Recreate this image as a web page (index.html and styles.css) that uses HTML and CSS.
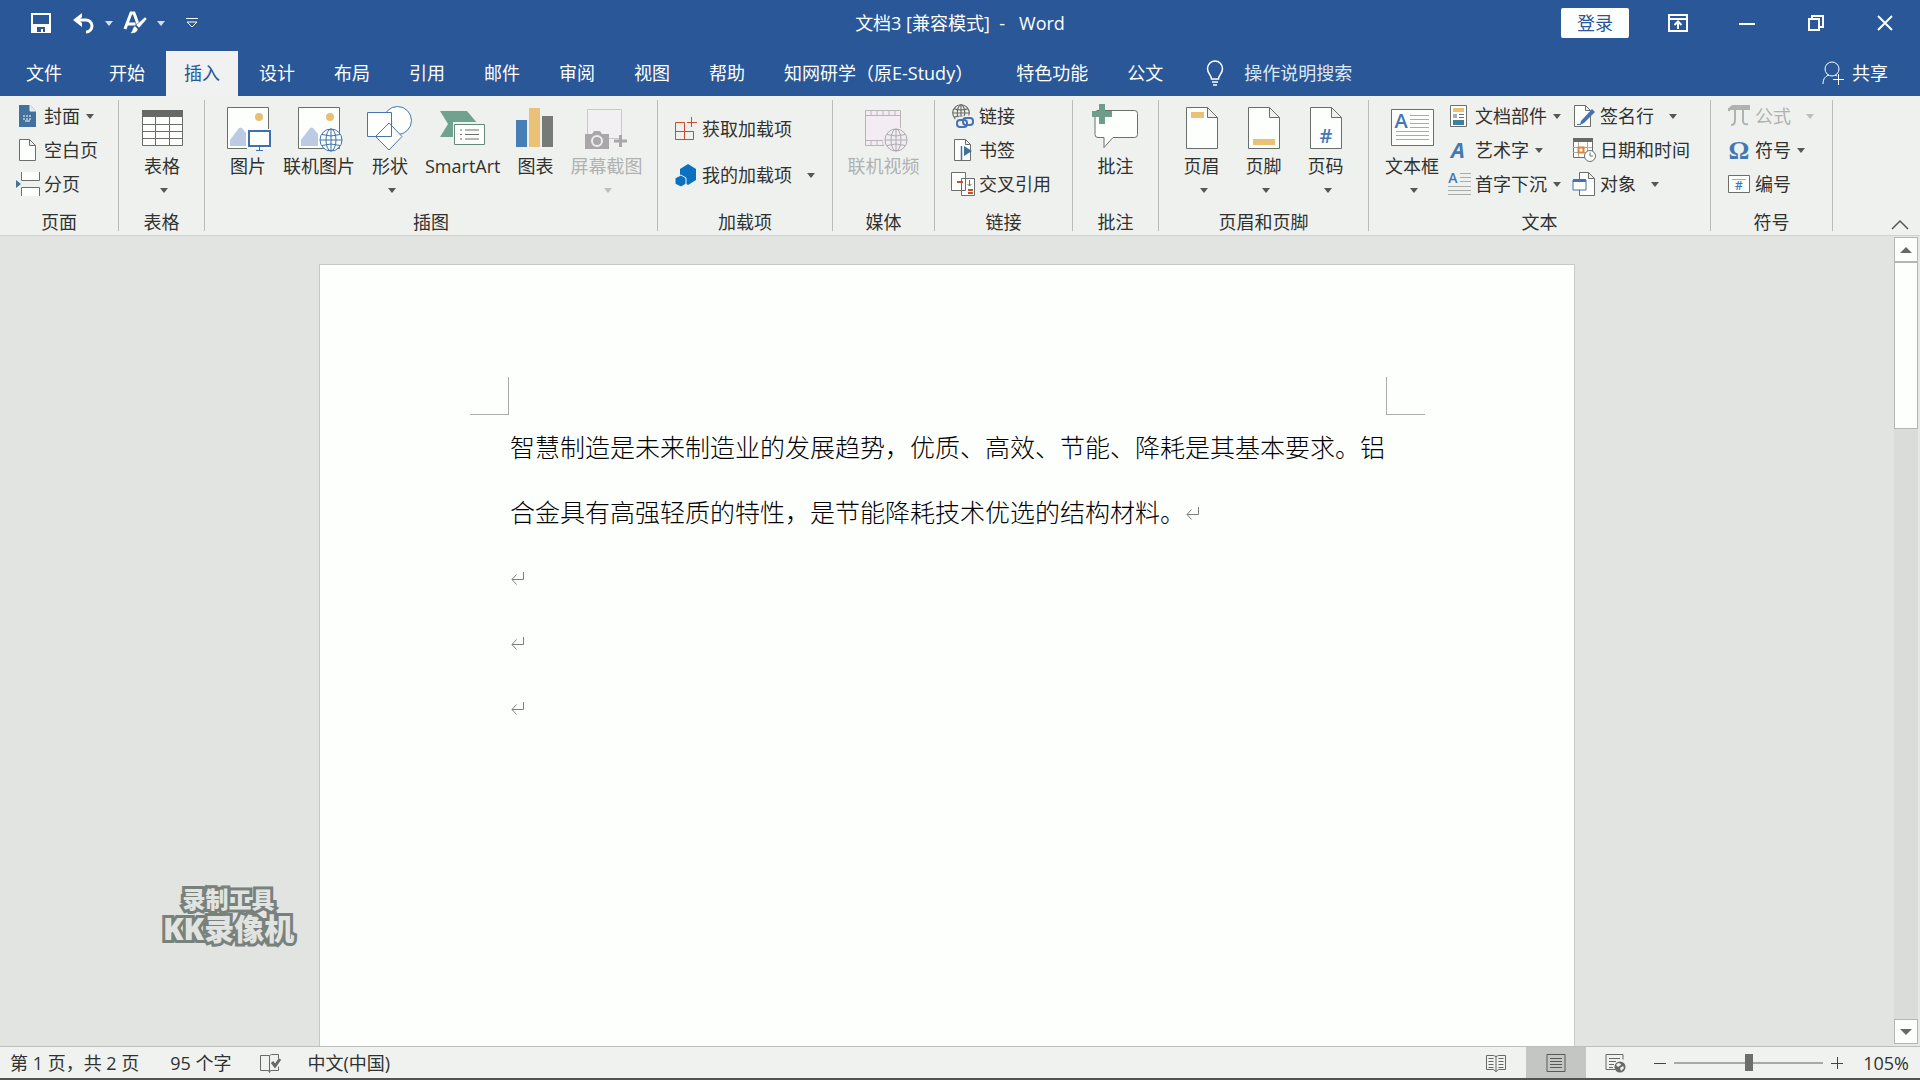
FILE: index.html
```html
<!DOCTYPE html>
<html lang="zh-CN">
<head>
<meta charset="utf-8">
<meta name="viewport" content="width=device-width, initial-scale=1">
<title>文档3 [兼容模式] - Word</title>
<link rel="stylesheet" href="styles.css">
</head>
<body>
<svg class="defs" aria-hidden="true">
  <symbol id="globe" viewBox="0 0 24 24">
    <circle cx="12" cy="12" r="11"/><ellipse cx="12" cy="12" rx="5" ry="11"/><path d="M12 1v22M1 12h22M3 6.500q9 3 18 0M3 17.500q9-3 18 0"/>
  </symbol>
  <symbol id="enter" viewBox="0 0 15 16">
    <path d="M13.500 2v7.500H2M6.500 4.500 2 9.500l4.500 5"/>
  </symbol>
</svg>
<div class="app">
<header class="top">
  <div class="titlebar">
    <div class="quick">
      <button class="qbtn" aria-label="保存"><svg width="20" height="20"><path d="M1 1h18v18H1zM1 12h18" fill="none" stroke="#fff" stroke-width="2"/><path d="M1 12h18v7H1z" fill="#fff"/><path d="M6 14h8v5h-2v-3h-2v3H6z" fill="#295797"/></svg></button>
      <button class="qbtn" aria-label="撤消"><svg width="22" height="20"><path d="M3 7h10a6 6 0 0 1 0 12" fill="none" stroke="#fff" stroke-width="3"/><path d="M0 7 9 0v4L6 7l3 3v4z" fill="#fff"/></svg></button>
      <button class="qbtn" aria-label="撤消选项"><span class="caret"></span></button>
      <button class="qbtn" aria-label="文本格式"><svg width="24" height="24"><path d="M2 18 8 2h3l4 11M4.500 13h8" fill="none" stroke="#fff" stroke-width="3"/><path d="m22 6 2 2-8 9-3-3zM12 15l3 3c-1 4-4 5-8 4 3-1 2-6 5-7z" fill="#fff" stroke="#295797" stroke-width=".500"/></svg></button>
      <button class="qbtn" aria-label="格式选项"><span class="caret"></span></button>
      <button class="qbtn custom" aria-label="自定义快速访问工具栏"><svg width="14" height="12"><path d="M1 1.500h12M2 5h10l-5 5z" fill="none" stroke="#fff"/></svg></button>
    </div>
    <h1 class="title">文档3 [兼容模式]&nbsp; -&nbsp;&nbsp; Word</h1>
    <div class="window">
      <button class="login">登录</button>
      <button class="wbtn" aria-label="功能区显示选项"><svg width="20" height="18"><path d="M1 1h18v16H1zM1 5h18M10 15V8M6.500 11 10 7.500l3.500 3.500" fill="none" stroke="#fff" stroke-width="2"/></svg></button>
      <button class="wbtn" aria-label="最小化"><svg width="16" height="16"><path d="M0 9h16" stroke="#fff" stroke-width="2"/></svg></button>
      <button class="wbtn" aria-label="还原"><svg width="16" height="16"><path d="M1 4h10v11H1zM4 4V1h11v11h-4" fill="none" stroke="#fff" stroke-width="2"/></svg></button>
      <button class="wbtn" aria-label="关闭"><svg width="16" height="16"><path d="m1 1 14 14M15 1 1 15" stroke="#fff" stroke-width="2"/></svg></button>
    </div>
  </div>
  <nav class="tabs">
    <button class="tab file">文件</button>
    <button class="tab">开始</button>
    <button class="tab active">插入</button>
    <button class="tab">设计</button>
    <button class="tab">布局</button>
    <button class="tab">引用</button>
    <button class="tab">邮件</button>
    <button class="tab">审阅</button>
    <button class="tab">视图</button>
    <button class="tab">帮助</button>
    <button class="tab plugin">知网研学（原E-Study）</button>
    <button class="tab">特色功能</button>
    <button class="tab">公文</button>
    <label class="search"><svg width="18" height="26" aria-hidden="true"><path d="M5.500 19c0-4-4-5-4-10.500a7.500 7.500 0 0 1 15 0c0 5.500-4 6.500-4 10.500zM6 22h6M7 25h4" fill="none" stroke="#fff" stroke-width="1.500"/></svg><input type="text" placeholder="操作说明搜索" aria-label="操作说明搜索"></label>
    <button class="share"><svg width="22" height="24" aria-hidden="true"><circle cx="10" cy="8" r="7" fill="none" stroke="#fff"/><path d="M1 23c0-6 3-8 6-9m6 0 2 1M16.500 13v11M11 18.500h11" fill="none" stroke="#fff"/></svg>共享</button>
  </nav>
</header>

<section class="ribbon" aria-label="插入">
  <div class="group g-page">
    <div class="body"><div class="stack">
      <button class="small"><svg width="24" height="24"><path d="M3 1h11l6 6v16H3z" fill="#41719c"/><path d="M14 1v6h6" fill="#dfe9f2" stroke="#eff1ee"/><path d="M7 12h9M7 15h9" stroke="#fff" stroke-dasharray="2 1"/><path d="M9 17h5" stroke="#fff"/></svg><span>封面</span><i class="caret"></i></button>
      <button class="small"><svg width="24" height="24"><path d="M3.500 1.500h10l6 6v15h-16zM13.500 1.500v6h6" class="paper"/></svg><span>空白页</span></button>
      <button class="small"><svg width="24" height="24"><path d="M5.500 0v8.500h18V0M5.500 24v-8.500h18V24" class="paper"/><path d="m0 8 5 4-5 4z" fill="#41719c"/></svg><span>分页</span></button>
    </div></div>
    <div class="name">页面</div>
  </div>
  <div class="group g-table">
    <div class="body">
      <button class="big"><svg width="46" height="48"><path d="M3.500 6.500h40v35h-40z" class="paper"/><path d="M3 6h41v7H3z" fill="#666a67"/><path d="M3 20.500h41M3 27.500h41M3 34.500h41M16.500 13v28M30.500 13v28" class="line"/></svg><span>表格</span><i class="caret"></i></button>
    </div>
    <div class="name">表格</div>
  </div>
  <div class="group g-illus">
    <div class="body">
      <button class="big"><svg width="46" height="48"><path d="M2.500 3.500h41v41h-41z" class="paper"/><circle cx="34" cy="13" r="4" fill="#e8bf73"/><path d="M5 42V36l9-12q2-1 3 0l4 5v13z" fill="#bccae3"/><path d="M22 25h24v20H22z" fill="#fcfefc"/><path d="M24 27h21v15H24z" fill="#fdfffc" stroke="#3d72ae" stroke-width="2"/><path d="M34.500 43v3M31 46.500h7" stroke="#3d72ae"/></svg><span>图片</span></button>
      <button class="big"><svg width="48" height="48"><path d="M3.500 3.500h41v41h-41z" class="paper"/><circle cx="35" cy="13" r="4" fill="#e8bf73"/><path d="M6 42V36l9-12q2-1 3 0l5 6v12z" fill="#bccae3"/><circle cx="36" cy="36" r="11" fill="#fdfffc"/><use href="#globe" x="24" y="24" width="24" height="24" fill="none" stroke="#3d72ae"/></svg><span>联机图片</span></button>
      <button class="big"><svg width="46" height="48"><g fill="#fdfffc" stroke="#4676ab"><circle cx="30.500" cy="16.500" r="14"/><path d="M.500 8.500h24v24h-24zM22 19 35 32.500 22 46 8.500 32.500z"/></g></svg><span>形状</span><i class="caret"></i></button>
      <button class="big"><svg width="46" height="48"><path d="M0 7h27l11 13-11 13H0l8-13z" fill="#6fa38f"/><path d="M13 18h32v23H13z" fill="#eff1ee"/><path d="M14.500 20.500h30v20h-30z" fill="#fdfffc" stroke="#648b7a"/><path d="M20 26h2M25 26h14M20 30.500h2M25 30.500h14M20 35h2M25 35h14" class="line"/></svg><span>SmartArt</span></button>
      <button class="big"><svg width="46" height="48"><path d="M4 16h11v27H4z" fill="#477eb5"/><path d="M17 4h11v39H17z" fill="#eac176"/><path d="M30 12h11v31H30z" fill="#777b78"/></svg><span>图表</span></button>
      <button class="big" disabled><svg width="46" height="48"><path d="M4.500 5.500h34v29h-34z" fill="#f3f0f3" stroke="#cfc5d2"/><path d="M2 30h7l2-3h6l2 3h7v15H2z" fill="#aaa6aa"/><circle cx="14" cy="37" r="5" fill="none" stroke="#eee" stroke-width="2"/><path d="M37.500 31v12M31 37h13" stroke="#aaa6aa" stroke-width="3"/></svg><span>屏幕截图</span><i class="caret"></i></button>
    </div>
    <div class="name">插图</div>
  </div>
  <div class="group g-addins">
    <div class="body"><div class="stack wide">
      <button class="small"><svg width="24" height="24"><path d="M1.500 5.500h9v17h-9zM10.500 14.500h9v8h-18M1.500 14.500h9M17.500 0v10M13 5.500h10" fill="none" stroke="#cc4b2b"/></svg><span>获取加载项</span></button>
      <button class="small gap"><svg width="24" height="24"><path d="m14 1 8 5v11l-8 5-8-5V6z" fill="#0a70c0"/><path d="m7 12 5 3v6l-5 3-6-3v-6z" fill="#0a70c0" stroke="#eff1ee"/></svg><span>我的加载项</span><i class="caret"></i></button>
    </div></div>
    <div class="name">加载项</div>
  </div>
  <div class="group g-media">
    <div class="body">
      <button class="big" disabled><svg width="48" height="48"><path d="M5.500 6.500h35v35h-35z" fill="#f3edf3" stroke="#b9b3ba"/><path d="M5 11.500h36M5 36.500h36M11 6v5M17 6v5M23 6v5M29 6v5M35 6v5M11 37v4M17 37v4M23 37v4" fill="none" stroke="#b9b3ba"/><circle cx="36" cy="36" r="13" fill="#f0edf0"/><use href="#globe" x="24" y="24" width="24" height="24" fill="none" stroke="#b0aab2"/></svg><span>联机视频</span></button>
    </div>
    <div class="name">媒体</div>
  </div>
  <div class="group g-links">
    <div class="body"><div class="stack">
      <button class="small"><svg width="24" height="24"><use href="#globe" x="1" y="0" width="18" height="18" fill="none" stroke="#666a67" stroke-width="1.500"/><g fill="none" stroke="#eff1ee" stroke-width="5"><rect x="6" y="15" width="10" height="7" rx="3"/><rect x="12" y="14" width="10" height="7" rx="3"/></g><g fill="none" stroke="#4472b4" stroke-width="2"><rect x="6" y="16" width="10" height="7" rx="3"/><rect x="12" y="14" width="10" height="7" rx="3"/></g></svg><span>链接</span></button>
      <button class="small"><svg width="24" height="24"><path d="M3.500 1.500h11l5 5v16h-16zM14.500 1.500v5h5" class="paper"/><path d="M10.500 8v14" stroke="#41719c" stroke-width="1.500"/><path d="m13 8 8 5-8 5z" fill="#41719c"/></svg><span>书签</span></button>
      <button class="small"><svg width="24" height="24"><path d="M10.500 6.500h13v17h-13zM.500 .500h14v18H.500z" class="paper"/><path d="M6 10h6M17 18h5M17 21h5" stroke="#c8502d" stroke-width="2"/><path d="M18.500 8v6m-2-2 2 2 2-2" class="line"/></svg><span>交叉引用</span></button>
    </div></div>
    <div class="name">链接</div>
  </div>
  <div class="group g-comment">
    <div class="body">
      <button class="big"><svg width="48" height="48"><path d="M5.500 6.500h37q3 0 3 3v21q0 3-3 3H21l-9 10v-10H6q-3 0-3-3v-21q0-3 3-3z" class="paper"/><path d="M7 0h6v7h7v6h-7v7H7v-7H0V7h7z" fill="#6d9d8c"/></svg><span>批注</span></button>
    </div>
    <div class="name">批注</div>
  </div>
  <div class="group g-header">
    <div class="body">
      <button class="big"><svg width="46" height="48"><path d="M7.500 3.500h21l10 10v31h-31zM28.500 3.500v10h10" class="paper"/><path d="M12 8h13v6H12z" fill="#eac176"/></svg><span>页眉</span><i class="caret"></i></button>
      <button class="big"><svg width="46" height="48"><path d="M7.500 3.500h21l10 10v31h-31zM28.500 3.500v10h10" class="paper"/><path d="M12 35h22v6H12z" fill="#eac176"/></svg><span>页脚</span><i class="caret"></i></button>
      <button class="big"><svg width="46" height="48"><path d="M7.500 3.500h21l10 10v31h-31zM28.500 3.500v10h10" class="paper"/><text x="23" y="39" class="mark big-mark">#</text></svg><span>页码</span><i class="caret"></i></button>
    </div>
    <div class="name">页眉和页脚</div>
  </div>
  <div class="group g-text">
    <div class="body">
      <button class="big"><svg width="46" height="48"><path d="M2.500 5.500h42v36h-42z" class="paper"/><path d="M21 11.500h19M21 15.500h19M21 19.500h19M21 23.500h19M7 27.500h33M7 31.500h33M7 35.500h33" class="pale"/><text x="12" y="24" class="mark big-mark">A</text></svg><span>文本框</span><i class="caret"></i></button>
      <div class="stack">
        <button class="small"><svg width="24" height="24"><path d="M3.500 1.500h16v21h-16z" class="paper"/><path d="M6 4h11v4H6z" fill="#e8bf73"/><path d="M6 10h4v4H6z" fill="#9eb4b8"/><path d="M12 10.500h5M12 13.500h5" class="line"/><path d="M6 16h11v5H6z" fill="#3f7da3"/></svg><span>文档部件</span><i class="caret"></i></button>
        <button class="small"><svg width="24" height="24"><text x="11" y="20" class="mark art">A</text></svg><span>艺术字</span><i class="caret"></i></button>
        <button class="small"><svg width="24" height="24"><path d="M13 1.500h11M13 5.500h11M13 9.500h11M1 14.500h23M1 18.500h23M1 22.500h23" class="pale"/><text x="6" y="11" class="mark cap">A</text></svg><span>首字下沉</span><i class="caret"></i></button>
      </div>
      <div class="stack">
        <button class="small gap"><svg width="24" height="24"><path d="M2.500 1.500h11l5 5v16h-16zM13.500 1.500v5h5" class="paper"/><path d="m20 5 3 3L12 19l-4 2 1-4z" fill="#4472b4"/><path d="M5 20.500h4" stroke="#4472b4"/></svg><span>签名行</span><i class="caret"></i></button>
        <button class="small"><svg width="24" height="24"><path d="M1.500 2.500h19v17h-19z" class="paper"/><path d="M1 0h20v4H1z" fill="#666a67"/><path d="M1 9.500h19M1 14.500h19M6.500 4v15M15.500 4v15" class="pale"/><path d="M6.500 9.500h5v5h-5z" fill="#fff" stroke="#dd8336" stroke-width="2"/><circle cx="18" cy="18" r="5.500" class="paper"/><path d="M18 14.500V18h3" class="line"/></svg><span>日期和时间</span></button>
        <button class="small gap"><svg width="24" height="24"><path d="M7.500 .500h9l6 6v17h-15zM16.500 .500v6h6" class="paper"/><path d="M1 8h13v10H1z" fill="#fdfffc" stroke="#4472b4"/><path d="M1 7h13v3H1z" fill="#4472b4"/></svg><span>对象</span><i class="caret"></i></button>
      </div>
    </div>
    <div class="name">文本</div>
  </div>
  <div class="group g-symbol">
    <div class="body"><div class="stack">
      <button class="small gap" disabled><svg width="24" height="24"><path d="M2 7q1-5 5-5h15v3H2zM8 4v12q0 5-4 5M16 4v13q0 4 5 3" fill="none" stroke="#b0b2b0" stroke-width="2"/><path d="M3 3h19v3H3z" fill="#b0b2b0"/></svg><span>公式</span><i class="caret"></i></button>
      <button class="small"><svg width="24" height="24"><text x="12" y="21" class="sym">Ω</text></svg><span>符号</span><i class="caret"></i></button>
      <button class="small"><svg width="24" height="24"><path d="M1.500 3.500h21v17h-21z" class="paper"/><path d="M5 7.500h14" class="pale"/><text x="12" y="18" class="mark tiny">#</text></svg><span>编号</span></button>
    </div></div>
    <div class="name">符号</div>
  </div>
  <button class="collapse" aria-label="折叠功能区"><svg width="18" height="12"><path d="m1 10 8-8 8 8" fill="none" stroke="#555" stroke-width="1.500"/></svg></button>
</section>

<main class="workspace">
  <div class="canvas">
    <article class="sheet">
      <div class="margin-marks" aria-hidden="true"><span class="corner left"></span><span class="corner right"></span></div>
      <div class="text">
        <p>智慧制造是未来制造业的发展趋势，优质、高效、节能、降耗是其基本要求。铝合金具有高强轻质的特性，是节能降耗技术优选的结构材料。<svg class="ret" width="15" height="16"><use href="#enter"/></svg></p>
        <p><svg class="ret" width="15" height="16"><use href="#enter"/></svg></p>
        <p><svg class="ret" width="15" height="16"><use href="#enter"/></svg></p>
        <p><svg class="ret" width="15" height="16"><use href="#enter"/></svg></p>
      </div>
    </article>
    <div class="watermark"><span>录制工具</span><strong>KK录像机</strong></div>
  </div>
  <div class="scrollbar">
    <button class="sbtn" aria-label="向上滚动"><span class="tri up"></span></button>
    <div class="track"><div class="thumb"></div></div>
    <button class="sbtn" aria-label="向下滚动"><span class="tri down"></span></button>
  </div>
</main>

<footer class="status">
  <div class="info">
    <span class="pages">第 1 页，共 2 页</span>
    <span>95 个字</span>
    <button class="plain" aria-label="校对"><svg width="22" height="20"><path d="M10.500 3v16.500M10.500 2.500H1.500v15h8l1 2 1-2h8v-4M10.500 2.500l2-1h7v4" fill="none" stroke="#666a67"/><path d="m13 9 3 4 5-7" fill="none" stroke="#666a67" stroke-width="3"/></svg></button>
    <span>中文(中国)</span>
  </div>
  <div class="views">
    <button class="view" aria-label="阅读视图"><svg width="20" height="20"><path d="M.500 2.500h7l2.500 1 2.500-1h7v14h-7l-2.500 2-2.500-2h-7zM10 3v16M2.500 5.500h5M2.500 8.500h5M2.500 11.500h5M2.500 14.500h5M12.500 5.500h5M12.500 8.500h5M12.500 11.500h5M12.500 14.500h5" fill="none" stroke="#666a67"/></svg></button>
    <button class="view on" aria-label="页面视图"><svg width="20" height="20"><path d="M1 1.500h18v17H1zM4 5.500h12M4 8.500h12M4 11.500h12M4 14.500h12" fill="none" stroke="#555a56"/></svg></button>
    <button class="view" aria-label="Web 版式视图"><svg width="22" height="20"><path d="M10 16.500H1v-15h17v5M4 5.500h11M4 8.500h7M4 11.500h5M4 14.500h4" fill="none" stroke="#666a67"/><circle cx="15" cy="14" r="5.500" fill="#666a67"/><path d="M13 10q3 0 3 2l-3 2-2-2zM15 15l3-2 1 2-3 3z" fill="#eff1ee"/></svg></button>
    <div class="zoom">
      <button class="plain" aria-label="缩小"><svg width="12" height="12"><path d="M0 6.500h12" stroke="#444"/></svg></button>
      <input type="range" min="0" max="100" value="50" aria-label="显示比例">
      <button class="plain" aria-label="放大"><svg width="12" height="12"><path d="M0 6.500h12M6.500 0v12" stroke="#444"/></svg></button>
    </div>
    <button class="plain percent">105%</button>
  </div>
</footer>
</div>
</body>
</html>
```
FILE: styles.css
```css
* { box-sizing: border-box; }

body {
  margin: 0;
  font: 18px/24px "Open Sans", "Noto Sans CJK SC", sans-serif;
  color: #2f3230;
}

button {
  font: inherit;
  color: inherit;
  background: none;
  border: 0;
  padding: 0;
  white-space: nowrap;
}

svg { display: block; flex: none; overflow: visible; }
.defs { position: absolute; width: 0; height: 0; overflow: hidden; }

.app {
  display: flex;
  flex-direction: column;
  height: 100vh;
  border-bottom: 2px solid #505352;
  overflow: hidden;
}

/* Title bar and tabs */
.top { background: #295797; color: #fff; }

.titlebar {
  display: grid;
  grid-template-columns: 1fr auto 1fr;
  align-items: center;
  height: 51px;
  padding-bottom: 5px;
}

.quick { display: flex; align-items: center; padding-left: 31px; }
.qbtn { display: flex; align-items: center; justify-content: center; margin-right: 10px; }
.qbtn:first-child { margin-right: 22px; }
.custom { margin-left: 10px; }

.title { margin: 0; font-size: 18px; line-height: 24px; font-weight: 400; }

.window { display: flex; align-items: center; justify-content: flex-end; padding-right: 1px; }
.login {
  width: 68px;
  height: 30px;
  margin-right: 14px;
  border-radius: 2px;
  background: #fdfffc;
  color: #295797;
}
.wbtn { display: flex; align-items: center; justify-content: center; width: 69px; height: 46px; }

.tabs { display: flex; gap: 3px; height: 45px; }
.tab { padding: 0 18px 2px; }
.tab.file { padding: 0 26px 2px; }
.tab.plugin { padding-right: 22px; }
.tab.active { background: #f0f1f0; color: #295797; }

.search { display: flex; align-items: center; gap: 20px; padding: 0 0 2px 22px; }
.search input {
  width: 200px;
  padding: 0;
  border: 0;
  background: none;
  font: inherit;
  color: #fff;
}
.search input::placeholder { color: #dfe8f4; opacity: 1; }
.share { display: flex; align-items: center; gap: 8px; margin-left: auto; padding: 0 32px 2px 0; }

/* Ribbon */
.ribbon {
  display: flex;
  height: 140px;
  padding-top: 4px;
  background: #eff1ee;
  border-bottom: 1px solid #d0d3d0;
}
.group {
  display: flex;
  flex-direction: column;
  flex: none;
  margin-bottom: 4px;
  border-right: 1px solid #b9bcba;
}
.body { display: flex; flex: none; height: 102px; }
.name { padding-top: 8px; text-align: center; }

.g-page { width: 119px; }
.g-table { width: 86px; }
.g-illus { width: 453px; }
.g-addins { width: 175px; }
.g-media { width: 102px; }
.g-links { width: 138px; }
.g-comment { width: 86px; }
.g-header { width: 210px; }
.g-text { width: 342px; }
.g-symbol { width: 122px; }

.g-page .body, .g-addins .body, .g-links .body, .g-symbol .body { padding-left: 16px; }
.g-table .body, .g-illus .body, .g-text .body { padding-left: 8px; }
.g-media .body, .g-comment .body, .g-header .body { justify-content: center; }
.g-header .big { min-width: 62px; }
.g-text .stack + .stack { margin-left: 11px; }

.big {
  display: flex;
  flex-direction: column;
  align-items: center;
  min-width: 70px;
  padding-top: 4px;
}
.big span { line-height: 28px; }
.big .caret { margin: 8px 0 0 4px; }

.stack { display: flex; flex-direction: column; align-items: flex-start; }
.small { display: flex; align-items: center; gap: 4px; height: 34px; padding-bottom: 2px; }
.small .caret { margin-left: 2px; }
.small.gap .caret { margin-left: 11px; }
.wide { padding-top: 7px; }
.wide .small { height: 46px; }

.caret {
  width: 0;
  height: 0;
  border: 4px solid transparent;
  border-top: 5px solid currentColor;
  border-bottom: 0;
  opacity: .8;
}
button:disabled { color: #b0b2b0; }

.paper { fill: #fdfffc; stroke: #6b6f6c; }
.line { fill: none; stroke: #6b6f6c; }
.pale { fill: none; stroke: #a9adaa; }
.mark { font-family: "Open Sans", sans-serif; font-weight: 600; fill: #4478b2; text-anchor: middle; }
.big-mark { font-size: 20px; }
.art { font-size: 22px; font-style: italic; font-weight: 700; }
.cap { font-size: 14px; }
.tiny { font-size: 12px; }
.sym { font: 700 26px "Liberation Serif", serif; fill: #4478b2; text-anchor: middle; }

.collapse { margin: auto 11px 4px auto; }

/* Document area */
.workspace { display: flex; flex: 1; min-height: 0; background: #e2e4e2; }
.canvas { position: relative; flex: 1; overflow: hidden; padding-top: 28px; }
.sheet {
  width: 1256px;
  max-width: 100%;
  height: 100%;
  margin: 0 auto;
  border: 1px solid #c6c9c6;
  border-bottom: 0;
  background: #fdfffc;
  padding-top: 112px;
}
.margin-marks { display: flex; justify-content: space-between; padding: 0 149px 0 150px; }
.corner { width: 39px; height: 38px; border-bottom: 1px solid #a9aca9; }
.corner.left { border-right: 1px solid #a9aca9; }
.corner.right { border-left: 1px solid #a9aca9; }

.text {
  padding: 0 187px 0 190px;
  font-size: 25px;
  font-weight: 300;
  line-height: 65px;
  color: #000;
}
.text p { margin: 0; min-height: 65px; }
.ret { display: inline-block; vertical-align: 1px; fill: none; stroke: #7c807d; }

.watermark {
  position: absolute;
  left: 163px;
  bottom: 100px;
  display: flex;
  flex-direction: column;
  align-items: center;
  font-weight: 900;
  color: #e0e3e0;
  -webkit-text-stroke: 6px #78817c;
  paint-order: stroke fill;
}
.watermark span { font-size: 23px; line-height: 26px; }
.watermark strong { font-size: 30px; line-height: 34px; font-weight: 900; }

.scrollbar { display: flex; flex-direction: column; width: 26px; padding: 1px 2px 2px 0; background: #e6e8e6; }
.sbtn {
  display: flex;
  align-items: center;
  justify-content: center;
  height: 25px;
  border: 1px solid #b3b6b3;
  background: #fdfffc;
}
.tri { border: 6px solid transparent; }
.tri.up { border-top: 0; border-bottom-color: #666a67; }
.tri.down { border-bottom: 0; border-top-color: #666a67; }
.track { flex: 1; background: #dadcda; }
.thumb { height: 22%; border: 1px solid #b3b6b3; background: #fdfffc; }

/* Status bar */
.status {
  display: flex;
  justify-content: space-between;
  height: 32px;
  border-top: 1px solid #bcbfbc;
  background: #eff2ef;
}
.info { display: flex; align-items: center; gap: 27px; padding-left: 10px; }
.pages { margin-right: 4px; }
.views { display: flex; align-items: center; padding-right: 11px; }
.view { display: flex; align-items: center; justify-content: center; width: 60px; height: 31px; }
.view.on { background: #c3c6c3; }
.zoom { display: flex; align-items: center; gap: 8px; margin: 0 20px 0 8px; }
.zoom input {
  appearance: none;
  width: 149px;
  height: 18px;
  margin: 0;
  background: linear-gradient(#a6a9a6, #a6a9a6) center / 100% 2px no-repeat;
}
.zoom input::-webkit-slider-thumb {
  appearance: none;
  width: 8px;
  height: 17px;
  background: #6b6f6c;
}
```
